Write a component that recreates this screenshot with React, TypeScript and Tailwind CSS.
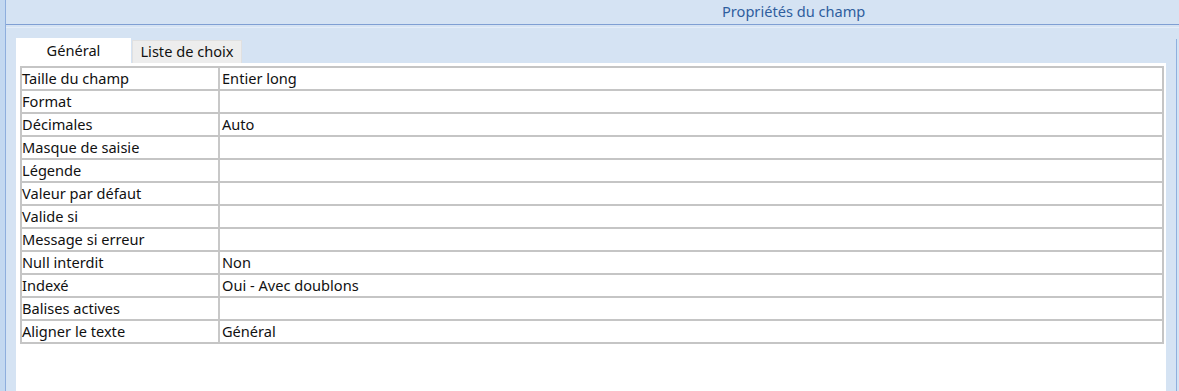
import React from 'react';

const rows: [string, string][] = [
  ['Taille du champ', 'Entier long'],
  ['Format', ''],
  ['Décimales', 'Auto'],
  ['Masque de saisie', ''],
  ['Légende', ''],
  ['Valeur par défaut', ''],
  ['Valide si', ''],
  ['Message si erreur', ''],
  ['Null interdit', 'Non'],
  ['Indexé', 'Oui - Avec doublons'],
  ['Balises actives', ''],
  ['Aligner le texte', 'Général'],
];

const App: React.FC = () => {
  return (
    <div className="w-[1179px] h-[391px] bg-[#d5e3f3] flex overflow-hidden font-['Noto_Sans',sans-serif] text-[14.6px] text-[#111111]">
      {/* left edge strip */}
      <div className="w-[6px] bg-[#c3d8f0] border-r border-[#8eaedd]" />

      <div className="flex-1 flex flex-col">
        {/* header */}
        <div className="h-[25px] border-b border-[#7f9fd3] pl-[716px] flex items-center text-[14.6px] text-[#2f5e9e] leading-none pb-[1px]">
          Propriétés du champ
        </div>
        <div className="h-[2px]" />
        <div className="h-[1px] bg-[#e4edf8]" />

        <div className="flex-1 flex pl-[10px]">
          <div className="w-[1150px] flex flex-col pt-[10px]">
            {/* tabs */}
            <div className="h-[25px] flex items-end">
              <div className="w-[115px] h-[25px] bg-white flex items-center justify-center">Général</div>
              <div className="w-[1px]" />
              <div className="w-[110px] h-[23px] bg-[#ededed] border-t border-l border-r border-[#e0e0e0] flex items-center justify-center">
                Liste de choix
              </div>
            </div>

            {/* white panel */}
            <div className="flex-1 bg-white pt-[3px] pl-[4px] pr-[2px]">
              <div className="border-2 border-[#c5c5c5]">
                {rows.map(([label, value]) => (
                  <div key={label} className="h-[23px] flex border-b-2 border-[#c5c5c5] last:h-[21px] last:border-b-0">
                    <div className="w-[196px] leading-[21px] whitespace-nowrap">{label}</div>
                    <div className="flex-1 border-l-2 border-[#c8c8c8] pl-[2px] leading-[21px] whitespace-nowrap">{value}</div>
                  </div>
                ))}
              </div>
            </div>
          </div>

          <div className="w-[10px]" />
          <div className="w-[1px] mt-[11px] bg-[#8fb0de]" />
          <div className="w-[2px]" />
        </div>
      </div>
    </div>
  );
};

export default App;
